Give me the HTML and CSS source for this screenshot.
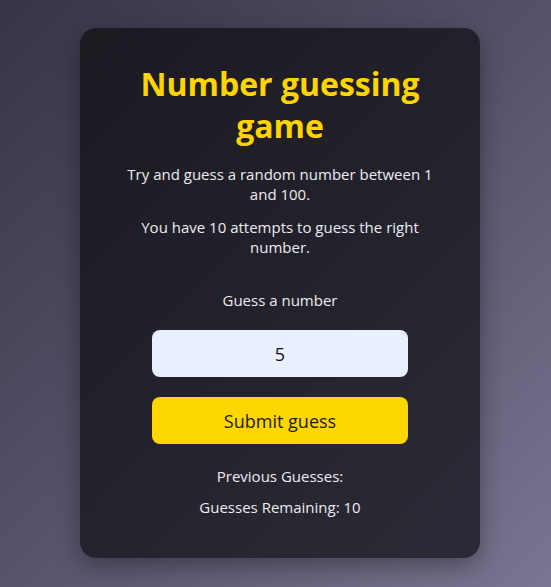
FILE: index.html
```html
<!DOCTYPE html>
<html lang="en">
<head>
<meta charset="utf-8">
<title>Number guessing game</title>
<link rel="stylesheet" href="styles.css">
</head>
<body>
<main class="card">
  <h1 class="title">Number guessing game</h1>
  <p class="intro">Try and guess a random number between 1 and 100.</p>
  <p class="intro">You have 10 attempts to guess the right number.</p>
  <form class="guess-form">
    <label class="label" for="guess">Guess a number</label>
    <input class="guess-input" id="guess" type="text" value="5">
    <button class="submit" type="button">Submit guess</button>
  </form>
  <p class="status">Previous Guesses: <span class="prev"></span></p>
  <p class="status">Guesses Remaining: <span class="remaining">10</span></p>
</main>
</body>
</html>
```

FILE: styles.css
```css
html, body {
  margin: 0;
  height: 100%;
}
body {
  font-family: "Open Sans", "Noto Sans", sans-serif;
  background: linear-gradient(135deg, #363446 0%, #56526a 50%, #7a7692 100%);
  display: flex;
  justify-content: center;
  align-items: flex-start;
  padding: 28px 0 0 9px;
  box-sizing: border-box;
}
.card {
  width: 400px;
  box-sizing: border-box;
  padding: 35px 40px 41px;
  border-radius: 16px;
  background: linear-gradient(135deg, #1b1a21 0%, #23222c 50%, #2c2a36 100%);
  box-shadow: 0 8px 24px rgba(0, 0, 0, 0.35);
  text-align: center;
  color: #ececf0;
}
.title {
  margin: 0 0 17px;
  font-size: 32px;
  line-height: 42px;
  font-weight: 700;
  color: #ffd400;
}
.intro {
  margin: 0 0 13px;
  font-size: 15px;
  line-height: 20px;
}
.guess-form {
  display: flex;
  flex-direction: column;
  align-items: center;
  margin-top: 33px;
}
.label {
  font-size: 15px;
  line-height: 20px;
  margin-bottom: 20px;
}
.guess-input {
  width: 256px;
  height: 47px;
  box-sizing: border-box;
  border: none;
  border-radius: 8px;
  background: #e8f0fe;
  font-family: inherit;
  font-size: 18px;
  text-align: center;
  color: #111;
  outline: none;
}
.submit {
  margin-top: 20px;
  width: 256px;
  height: 47px;
  border: none;
  border-radius: 8px;
  background: #ffd700;
  font-family: inherit;
  font-size: 18px;
  color: #1a1a1a;
  cursor: pointer;
}
.status {
  margin: 22px 0 0;
  font-size: 15px;
  line-height: 20px;
}
.status + .status {
  margin-top: 11px;
}
```
